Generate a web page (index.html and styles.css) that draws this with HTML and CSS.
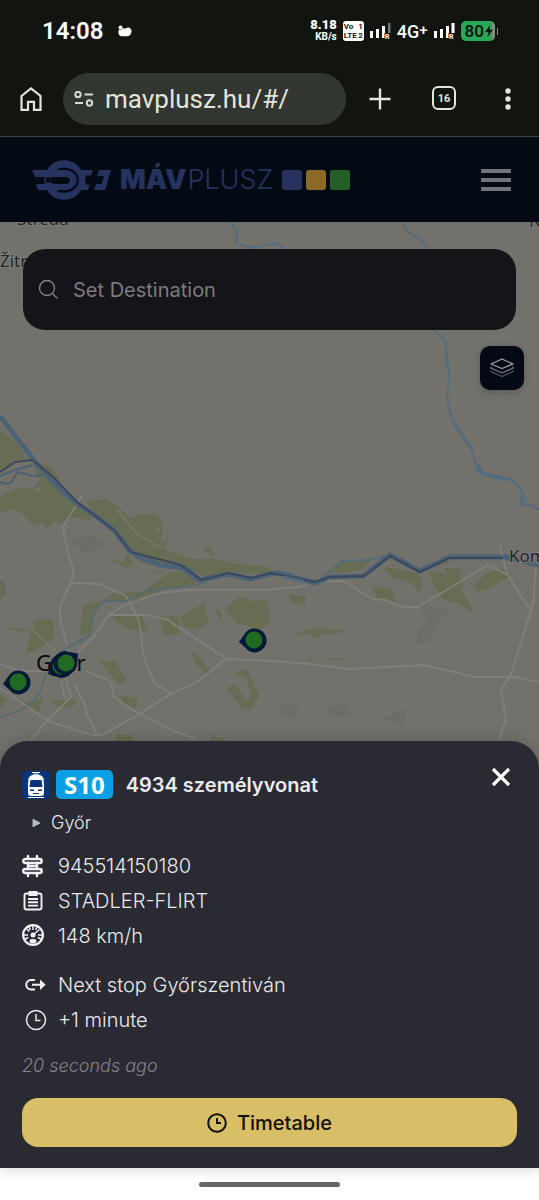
FILE: index.html
```html
<!DOCTYPE html>
<html lang="en">
<head>
<meta charset="utf-8">
<meta name="viewport" content="width=device-width, initial-scale=1">
<title>MÁV Plusz</title>
<link rel="stylesheet" href="styles.css">
</head>
<body>
<div class="status">
  <span class="clock">14:08</span>
  <svg class="weather" width="14" height="12" viewBox="0 0 14 12" fill="#fff"><circle cx="2.500" cy="2.500" r="2"/><path d="M1 4.500C3 5.500 4.500 4 5 3c1 .8 2 .8 3 .3C11 1 14 4 13.500 7 13 10 11 11.500 8.500 11.300H4C0 11.300 0 7 1 4.500z"/></svg>
  <div class="status-right">
    <div class="speed"><b>8.18</b><span>KB/s</span></div>
    <div class="volte"><span>Vo</span><span>1</span><span>LTE</span><span>2</span></div>
    <svg width="21" height="20" viewBox="0 0 21 20"><g fill="#fff"><path d="M0 10h3v7H0zM6 8h3v9H6zM12 5h3v12h-3z"/></g><path d="M18 2h2.500v10H18z" fill="#777"/><text x="15" y="18" class="roam">R</text></svg>
    <span class="net">4G<sup>+</sup></span>
    <svg width="21" height="20" viewBox="0 0 21 20"><path fill="#fff" d="M0 10h3v7H0zM6 8h3v9H6zM12 5h3v12h-3zM17.500 2h3v10h-3z"/><text x="15" y="18" class="roam">R</text></svg>
    <div class="battery"><span>80</span><svg width="8" height="12" viewBox="0 0 8 12"><path d="M5 0 0 7h3.500L2.500 12 8 4.800H4.500z" fill="#10140f"/></svg></div>
  </div>
</div>
<div class="toolbar">
  <button class="icon-btn" aria-label="Home"><svg width="24" height="26" viewBox="0 0 24 26" fill="none" stroke="#e2e5dc" stroke-width="2.200"><path d="M2.500 10 12 2.500 21.500 10v13.800H15v-8H9v8H2.500z"/></svg></button>
  <label class="url">
    <svg width="20" height="16" viewBox="0 0 20 16" fill="none" stroke="#d8dcd2" stroke-width="2"><circle cx="4" cy="3.500" r="2.700"/><path d="M10.500 3.500H19M1 12H9"/><circle cx="15.500" cy="12" r="2.700"/></svg>
    <input type="text" value="mavplusz.hu/#/" aria-label="Address">
  </label>
  <div class="tools">
    <button class="icon-btn" aria-label="New tab"><svg width="24" height="24" viewBox="0 0 24 24" stroke="#e2e5dc" stroke-width="2.400"><path d="M12 1.500v21M1.500 12h21"/></svg></button>
    <button class="icon-btn tabs" aria-label="Tabs">16</button>
    <button class="icon-btn" aria-label="Menu"><svg width="24" height="24" viewBox="0 0 24 24" fill="#e2e5dc"><circle cx="12" cy="4" r="2.700"/><circle cx="12" cy="12" r="2.700"/><circle cx="12" cy="20" r="2.700"/></svg></button>
  </div>
</div>
<header class="header">
  <a class="brand" href="#" aria-label="MÁV Plusz">
    <svg width="80" height="40" viewBox="0 0 80 40"><circle cx="32" cy="20" r="16" fill="#030a14" stroke="#26335e" stroke-width="7.500"/><path d="M14 17.500h24v5H14z" fill="#030a14"/><g fill="#26335e"><path d="M0 10h34a10 10 0 0 1 0 20H6l-2-6h29q5 0 5-3.500T33 17H3z"/><path d="M46 10h15l-2 5.500h-5q-2 4 .5 9h3L56 30H45z"/><path d="M64 24h6l-2 6h-6zM67 10h12l-6 20h-8l2-4h2l3-10h-7z"/></g><path d="M26 9.500c11-3 20 2 20 10.500S37 33.500 26 31" fill="none" stroke="#030a14" stroke-width="1.800"/></svg>
    <span class="mav">MÁV</span><span class="plusz">PLUSZ</span>
    <i class="sq blue"></i><i class="sq gold"></i><i class="sq green"></i>
  </a>
  <button class="burger" aria-label="Open menu"><i></i><i></i><i></i></button>
</header>
<main class="map">
  <svg class="map-art" viewBox="0 222 539 560" preserveAspectRatio="xMidYMin slice">
    <rect y="222" width="539" height="560" fill="#73716b"/>
    <g fill="#6e6c67"><path d="M416 603l25 6 10-3-12 17-9 13 0 6-14 2 2-14 10-9zM279 705l16-2 5 8-9 9-10-8zM329 708l16-4 6 9-9 5-12-4zM379 718l27-9-2 17zM70 540l20-6 15 10-17 12z"/></g>
    <g fill="#666d53">
      <path d="M0 431l14 8 13 19-12 5-15 10zM34 462l14 4 8 7 5 12-10 2-14-10z"/>
      <path d="M10 492l9-5 14 2 6-8 10-3 14 13 16 13 17 12-8 4-15-3-12 6-8-1-7 8-4-8-9 4-9-11-12-6-9 5-4-9-11-3z"/>
      <path d="M85 501l20-2 13 7 12 14 12 11 18 16 30 12 24 0 20 4 36 4v6l-20 1-20-3-20 8-15-8-50-7-15-10-12-16-14-13z"/>
      <path d="M128 520l14-7 16 2 5 12-2 18 10-11-6 13-10-1-12-12zM203 549l7-3 4 11zM111 560l12 2 6-10 4 12-7 4zM135 565l10 4 22 5-12-1zM170 572l10-1 18 10-6 6-25 2-25 8-18 5-15-2 10-6 25-3z"/>
      <path d="M26 654l8-33 15-2 5 2 0 16-9 8-20 10zM0 627l32 3-10 2zM83 605l20-4 10-8 22-1-20 5-14 5-8 14-4 16-9 3zM111 614l30 1 8 17-18-2-17-10zM160 615l19 2 0 17-16 1zM180 617l24-14 5 20-12 6-12-1zM213 607l8 5 2 12zM224 610l15-13 16 5 12-3 3 25-14 7-9-6-10-1-7-8zM190 652l7 3 12 14-1 6-12-11zM99 661l16 0 12 20-7 4-8-9zM227 688l8-4 11 16 5-2-5-21-12-4 13-4 12 27-8 14-9-2-14-18zM120 695l18 4-3 10-12-5zM50 701l27-2-4 8-15-1zM21 703l22-5-5 15-10-4zM118 734l12 1 5 7h-20zM210 734l18 8h-17zM0 696l9 3-9 10zM0 581q7 4 5 14l-5 4z"/>
      <path d="M288 594l18 2-1 9-13-3zM292 634l28-6 30 4-26 2-8 5-5-4zM372 587l20 2 4 14-18-4zM384 568l15 1 20 5 4 10-4 9-7-10-20-6zM428 571l18 3 13 12 16 28-16-11-15-3-10-14zM444 568h15l5 20-12-5zM474 585l13-12 18-5 7 7-22 13-12 4zM428 565l26-5-6 3zM327 572l13-11 30 0-6 8-20 4zM328 660l8-3 8 3zM304 659l10 0-3 3z"/>
    </g>
    <path d="M24 484l2-5 4 9-8-2zM35 490l6-6v9zM155 530l4-4 1 7z" fill="#73716b"/>
    <g fill="none" stroke="#827f7b" stroke-width="1.800" stroke-linejoin="round">
      <path d="M83 494l-20 33 5 27 6 17-3 12-11 23 1 17 8 31M71 583l29 1 17 8 8 3 13 23 3 14 2 22 4 13 8 16 18 12M0 664l20 7h28M78 652l16-16 14-20 14-10 34-12 28-4h80l34-3 24-6h22l28 18 14 1 16 7h16l70-42 20 10M111 615h35l20 4 58 38M86 671l24 10 4 16 20 14 40 20 22 8M0 688l50 34 42 13h10l36-20 34-22 24-10 30-24 45 2 40 3 38 5 75-4 30 7 20 5h40l25 5M65 676l6 21-10 10-16 16-22 27M74 684l10 19 3 12 11 21M61 681l4 17M536 568l-3 36-22 70-10 16 5 29-8 23M500 546l6 25 10 18 14 20"/>
      <path d="M117 510l20 24 24 14M32 629l22 22" stroke="#7a7a67" stroke-width="1.400"/>
    </g>
    <g fill="none" stroke-linejoin="round">
      <path d="M0 476l15-6 18-5M0 482l5 2 6-1 7-11 15 4 12-1M180 568l14 11 9 1" stroke="#4c6276" stroke-width="2.200"/>
      <path d="M0 717q31-7 41-27l6-20 12-17 31-18 4-23 11-11h21l20-10 50-6 10-3M1 581q5 5 4 14" stroke="#526b75" stroke-width="1.500"/>
      <path d="M230 222l7 9-1 12 15 5 26-5 6 6M401 222l6 9 15 10 6 8M433 330q14 8 13 18l3 27-2 25 6 21 18 27 7 24 33 7 11 12 4 13 20 8M320 580l22-19 28-1 20-5" stroke="#526c80" stroke-width="1.800"/>
      <path d="M0 416l33 43 17 20 13 13 15 12 19 13 17 13 16 21 7 5 23 9 25 3 15 12 29-6 21 5 20-5 10-1 35 10 15-6 33-1 27-21 30 16 30-14 55 0 34 8" stroke="#4b6375" stroke-width="5"/>
      <path d="M0 472l15-10 17-2 20 16 26 27 36 27 17 22 50 13 20 15 28-7 22 5 20-5 44 9 15-5 34-1 26-20 30 16 29-14h54" stroke="#3c485d" stroke-width="2"/>
      <path d="M453 422l18 26M477 464l6 10 25 6M520 497l3 9M446 350l2 20M284 577l20 5" stroke="#526c80" stroke-width="3"/>
    </g>
    <g class="place"><text x="17" y="225">Streda</text><text x="0" y="267">Žitn</text><text x="529" y="227">N</text><text x="509" y="562">Komárom</text></g>
    <text class="city" x="36" y="671">Győr</text>
    <defs><g id="pin"><path d="M-15 2-8-8A12 12 0 1 1-5 11z" fill="#021a38"/><circle r="8.500" fill="#206b21"/></g></defs>
    <use href="#pin" x="254" y="640"/><use href="#pin" x="18" y="682"/>
    <use href="#pin" transform="translate(61 666) rotate(-25)"/><use href="#pin" transform="translate(66 663) rotate(150)"/>
  </svg>
  <label class="search">
    <svg width="22" height="22" viewBox="0 0 22 22" fill="none" stroke="#858588" stroke-width="1.300"><circle cx="9" cy="9" r="7.500"/><path d="M14.500 14.500l5 5"/></svg>
    <input type="text" placeholder="Set Destination" aria-label="Set Destination">
  </label>
  <button class="layers" aria-label="Map layers"><svg width="24" height="20" viewBox="0 0 24 20" fill="none" stroke-width="1.300" stroke-linejoin="round"><path d="M1 12.500v1.200L12 18.500l11-4.800v-1.200" stroke="#52575f"/><path d="M1 8.500v1.700L12 15l11-4.800V8.500" stroke="#777b80"/><path d="M12 1 23 6 12 10.500 1 6z" stroke="#a1a3a6"/></svg></button>
</main>
<section class="sheet">
  <div class="title-row">
    <svg class="train" width="28" height="28" viewBox="0 0 28 28"><rect width="28" height="28" rx="4" fill="#06357b"/><path d="M10 1.500h8M11 3.200h6" stroke="#fff" stroke-width="1"/><path d="M10 4h8q3 1 3.500 3.500L22 14v8q0 3-3 3H9q-3 0-3-3v-8l.5-6.500Q7 5 10 4z" fill="#fff"/><path d="M8.500 9h11l1 7h-13z" fill="#06357b"/><path d="M8 18.500h4V20H8zM16 18.500h4V20h-4zM11 22h6v1h-6z" fill="#06357b"/><path d="M6 26.500h16" stroke="#fff" stroke-width="1"/></svg>
    <span class="line">S10</span>
    <h1>4934 személyvonat</h1>
    <button class="close" aria-label="Close"><svg width="20" height="20" viewBox="0 0 20 20" stroke="#fff" stroke-width="3.200"><path d="M2 2l16 16M18 2 2 18"/></svg></button>
  </div>
  <p class="dest"><svg width="9" height="10" viewBox="0 0 9 10"><path d="M1 1.200 8 5 1 8.800z" fill="#b2bbc6" stroke="#b2bbc6" stroke-linejoin="round"/></svg>Győr</p>
  <ul class="facts">
    <li><svg width="22" height="24" viewBox="0 0 22 24" fill="none" stroke="#f1f1f4" stroke-width="2.400" stroke-linecap="round"><path d="M6 2v2M15 2v2M6 20v2M15 20v2M6 9v6M15 9v6"/><rect x="1.200" y="5" width="18.500" height="4" rx="2"/><rect x="1.200" y="15" width="18.500" height="4" rx="2"/><path d="M6 12h9"/></svg>945514150180</li>
    <li><svg width="22" height="22" viewBox="0 0 22 22" fill="none" stroke="#f1f1f4" stroke-width="1.900"><rect x="2.500" y="3.500" width="17" height="16" rx="2"/><path d="M7.500 5V2h7v3zM6 9h10M6 12.300h10M6 15.600h10"/></svg>STADLER-FLIRT</li>
    <li><svg width="22" height="24" viewBox="0 0 22 24" fill="none" stroke="#f1f1f4"><circle cx="11" cy="11" r="9.900" stroke-width="2.200"/><path d="M2 11h4M16 11h4M4.800 5l2.500 2.500M11 2v4M17.500 5.500 11 11M7 3l1.300 3M15 3l-1.300 3M3 15l3.300-1.500M19 15l-3.300-1.500" stroke-width="1.500"/><circle cx="11" cy="11" r="2.500" fill="#f1f1f4" stroke="none"/><rect x="8" y="15.500" width="6" height="3.500" rx="1.500" fill="#f1f1f4"/></svg>148 km/h</li>
  </ul>
  <ul class="facts trip">
    <li><svg width="26" height="22" viewBox="0 0 26 22" fill="none" stroke="#f1f1f4" stroke-width="2"><path d="M13 6H9a4.500 4.500 0 0 0 0 9.500h4M10 10.700h12"/><path d="M19 7.700l3.200 3-3.200 3z" fill="#f1f1f4"/></svg>Next stop Győrszentiván</li>
    <li><svg width="26" height="22" viewBox="0 0 26 22" fill="none" stroke="#e9e9ec" stroke-width="1.500"><circle cx="14" cy="11" r="9.500"/><path d="M14 5v6.500h4.500"/></svg>+1 minute</li>
  </ul>
  <p class="ago">20 seconds ago</p>
  <button class="timetable"><svg width="20" height="20" viewBox="0 0 20 20" fill="none" stroke="#120f04" stroke-width="2"><circle cx="10" cy="10" r="8.800"/><path d="M10 5v5h4"/></svg>Timetable</button>
</section>
<div class="gesture"><i></i></div>
</body>
</html>
```

FILE: styles.css
```css
* { box-sizing: border-box; }
body {
  margin: 0;
  min-height: 100vh;
  display: flex;
  flex-direction: column;
  background: #11140f;
  font-family: Inter, "Liberation Sans", sans-serif;
  color: #e9e9ec;
}
button, input { font: inherit; color: inherit; border: 0; background: none; padding: 0; margin: 0; }
svg { flex: none; display: block; }
p, h1, ul { margin: 0; padding: 0; }

.status {
  height: 62px;
  padding: 0 44px 0 42px;
  display: flex;
  align-items: center;
  font-family: Roboto, "Liberation Sans", sans-serif;
  color: #fff;
}
.clock { font-size: 24px; font-weight: 600; }
.weather { margin-left: 15px; }
.status-right { margin-left: auto; display: flex; align-items: center; gap: 6px; }
.speed { display: flex; flex-direction: column; align-items: flex-end; font-size: 10px; line-height: 12px; font-weight: 700; }
.speed b { font-size: 13px; }
.volte {
  width: 21px;
  height: 20px;
  padding: 1px;
  display: grid;
  grid-template-columns: 13px 1fr;
  border-radius: 3px;
  background: #fff;
  color: #11140f;
  font-size: 8px;
  line-height: 9px;
  font-weight: 700;
}
.volte span:nth-child(even) { text-align: right; }
.roam { font: 700 7px Roboto, sans-serif; fill: #fff; stroke: #11140f; stroke-width: 2px; paint-order: stroke; }
.net { font-size: 18px; font-weight: 500; }
.net sup { font-size: 15px; line-height: 0; vertical-align: 3px; }
.battery {
  position: relative;
  height: 20px;
  padding: 0 2px 0 4px;
  display: flex;
  align-items: center;
  gap: 1px;
  border-radius: 5px;
  background: linear-gradient(90deg, #26a957 90%, #858a85 90%);
  color: #10140f;
  font-size: 17px;
  font-weight: 600;
}
.battery::after { content: ""; position: absolute; right: -3px; top: 7px; width: 1px; height: 7px; background: #858a85; }

.toolbar {
  height: 75px;
  padding: 0 19px;
  display: flex;
  align-items: center;
  border-bottom: 1px solid #3c443e;
  color: #e2e5dc;
  font-family: Roboto, "Liberation Sans", sans-serif;
}
.icon-btn { width: 24px; height: 26px; display: grid; place-items: center; }
.url {
  flex: 1;
  min-width: 0;
  height: 52px;
  margin: 0 22px 0 20px;
  padding: 0 12px 0 11px;
  display: flex;
  align-items: center;
  gap: 11px;
  border-radius: 26px;
  background: #313630;
}
.url input { flex: 1; min-width: 0; font-size: 26px; }
.tools { display: flex; gap: 40px; }
.tabs { height: 24px; border: 2px solid #e2e5dc; border-radius: 6px; font-size: 11px; font-weight: 700; }

.header {
  height: 85px;
  padding: 0 28px 0 32px;
  display: flex;
  align-items: center;
  justify-content: space-between;
  background: #030a14;
}
.brand { display: flex; align-items: center; color: #26335e; text-decoration: none; font-size: 27px; line-height: 40px; }
.mav { margin-left: 8px; font-weight: 900; }
.plusz { margin-left: 1px; font-weight: 300; }
.sq { width: 20px; height: 20px; margin-left: 4px; border-radius: 3px; }
.blue { margin-left: 9px; background: #27335e; }
.gold { background: #8b6a25; }
.green { background: #245d27; }
.burger { display: grid; gap: 5px; }
.burger i { width: 30px; height: 4px; background: #717377; }

.map { flex: 1; position: relative; overflow: hidden; padding: 27px 23px 0; background: #73716b; }
.map-art { position: absolute; inset: 0; width: 100%; height: 100%; }
.place text { font: 17px "Noto Sans", sans-serif; fill: #222326; stroke: #807e78; stroke-width: 2px; paint-order: stroke; }
.city { font: 22px "Noto Sans", sans-serif; fill: #070809; }
.search {
  position: relative;
  height: 81px;
  padding: 0 15px;
  display: flex;
  align-items: center;
  gap: 13px;
  border-radius: 22px;
  background: #151419;
}
.search input { flex: 1; min-width: 0; font-size: 20px; }
.search input::placeholder { color: #7c7b80; opacity: 1; }
.layers {
  position: relative;
  width: 44px;
  height: 44px;
  margin: 16px -8px 0 auto;
  display: grid;
  place-items: center;
  border-radius: 10px;
  background: #030a14;
  box-shadow: 0 2px 10px #0003;
}

.sheet {
  position: relative;
  margin-top: -28px;
  padding: 28px 22px 21px;
  border-radius: 28px 28px 0 0;
  background: #2a2a32;
  box-shadow: 0 0 16px #0003;
  font-weight: 300;
}
.title-row { height: 32px; display: flex; align-items: center; }
.line {
  margin: 0 13px 2px 6px;
  padding: 0 8px;
  border-radius: 5px;
  background: #0a9fe4;
  color: #fff;
  font: 700 24px/29px "Open Sans", sans-serif;
}
h1 { font-size: 20px; font-weight: 600; color: #e9e9f0; }
.close { margin: 0 6px 16px auto; }
.dest { margin-top: 10px; padding-left: 10px; display: flex; align-items: center; gap: 10px; font-size: 18px; line-height: 24px; }
.facts { margin-top: 13px; list-style: none; }
.facts li { height: 35px; display: flex; align-items: center; gap: 14px; font-size: 20px; }
.trip { margin-top: 14px; }
.trip li { gap: 10px; }
.ago { margin-top: 17px; font-size: 18px; line-height: 24px; font-style: italic; color: #85858c; }
.timetable {
  width: 100%;
  height: 49px;
  margin-top: 20px;
  display: flex;
  align-items: center;
  justify-content: center;
  gap: 10px;
  border-radius: 16px;
  background: #d8be66;
  color: #120f04;
  font-size: 20px;
  font-weight: 500;
}
.gesture { height: 32px; padding-top: 14px; background: #fff; }
.gesture i { display: block; width: 141px; height: 5px; margin: 0 auto; border-radius: 3px; background: #666; }
```
